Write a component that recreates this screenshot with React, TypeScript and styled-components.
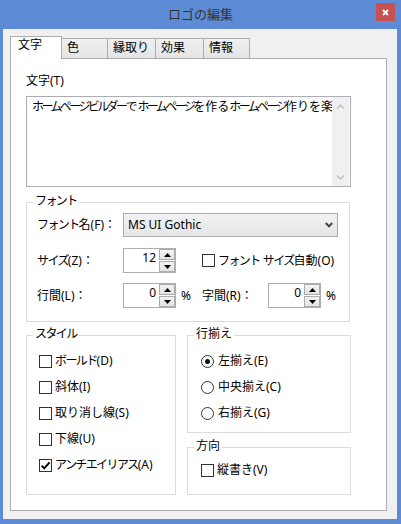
import React from 'react';
import styled, { createGlobalStyle, css } from 'styled-components';

const Global = createGlobalStyle`
  html, body { margin: 0; padding: 0; }
  body {
    font-family: "Noto Sans", "Noto Sans CJK JP", sans-serif;
    font-size: 12px;
    color: #000;
  }
  * { box-sizing: border-box; }
`;

const KanaRun = styled.span<{ $ls: number }>`
  letter-spacing: ${p => p.$ls}px;
`;

const KANA = /([\u30A0-\u30FF]+)/;

const Ja: React.FC<{ text: string; ls?: number }> = ({ text, ls = -1.6 }) => (
  <>
    {text.split(KANA).map((part, i) =>
      i % 2 === 1 ? (
        <KanaRun key={i} $ls={ls}>
          {part}
        </KanaRun>
      ) : (
        <React.Fragment key={i}>{part}</React.Fragment>
      )
    )}
  </>
);

const Window = styled.div`
  width: 401px;
  height: 524px;
  background: #5e8bd6;
  display: flex;
  flex-direction: column;
`;

const TitleBar = styled.div`
  height: 29px;
  flex-shrink: 0;
  display: grid;
  grid-template-columns: 1fr auto 1fr;
  align-items: center;
`;

const Title = styled.div`
  grid-column: 2;
  margin-top: -1px;
  font-family: "Noto Sans CJK JP", sans-serif;
  font-size: 13px;
  line-height: 16px;
  color: #333;
`;

const CloseButton = styled.div`
  grid-column: 3;
  justify-self: end;
  align-self: start;
  margin: 3px 6px 0 0;
  width: 19px;
  height: 18px;
  background: #c75050;
  display: flex;
  align-items: center;
  justify-content: center;
`;

const Body = styled.div`
  flex: 1;
  margin: 0 4px 5px 3px;
  background: #f0f0f0;
  padding: 7px 0 0 7px;
`;

const TabStrip = styled.div`
  display: flex;
  align-items: flex-end;
  height: 22px;
  position: relative;
  z-index: 1;
`;

const Tab = styled.div<{ $active?: boolean; $w: number }>`
  position: relative;
  width: ${p => p.$w}px;
  margin-left: -1px;
  border: 1px solid #acacac;
  border-bottom: none;
  line-height: 16px;
  white-space: nowrap;
  &:first-child { margin-left: 0; }
  ${p =>
    p.$active
      ? css`
          height: 23px;
          margin-bottom: -1px;
          background: #fff;
          padding: 0 0 0 7px;
          z-index: 2;
        `
      : css`
          height: 20px;
          background: linear-gradient(#f0f0f0, #e5e5e5);
          padding: 1px 0 0 5px;
        `}
`;

const Panel = styled.div`
  width: 377px;
  height: 453px;
  background: #fff;
  border: 1px solid #acacac;
  padding: 14px 0 0 15px;
  display: flex;
  flex-direction: column;
`;

const FieldLabel = styled.div`
  line-height: 16px;
`;

const TextBox = styled.div`
  margin-top: 7px;
  width: 325px;
  height: 91px;
  border: 1px solid #abadb3;
  display: flex;
`;

const TextContent = styled.div`
  flex: 1;
  min-width: 0;
  overflow: hidden;
  white-space: nowrap;
  padding: 2px 0 0 5px;
  line-height: 16px;
`;

const ScrollTrack = styled.div`
  width: 17px;
  margin-right: 1px;
  background: #f0f0f0;
  display: flex;
  flex-direction: column;
  justify-content: space-between;
  align-items: center;
  padding: 7px 0 6px;
`;

const Group = styled.div<{ $pl: number; $pb: number; $w?: number; $mt?: number; $grow?: boolean }>`
  border: 1px solid #dcdcdc;
  padding: 0 0 ${p => p.$pb}px ${p => p.$pl}px;
  ${p => (p.$w ? `width: ${p.$w}px;` : '')}
  margin-top: ${p => p.$mt ?? 0}px;
  ${p => (p.$grow ? 'flex: 1;' : '')}
`;

const Legend = styled.div<{ $pl: number }>`
  width: fit-content;
  margin: -9px 0 0 ${p => 6 - p.$pl}px;
  padding: 0 2px;
  background: #fff;
  line-height: 14px;
`;

const Row = styled.div<{ $h: number; $mt: number }>`
  display: flex;
  align-items: center;
  height: ${p => p.$h}px;
  margin-top: ${p => p.$mt}px;
`;

const RowLabel = styled.div<{ $w: number }>`
  width: ${p => p.$w}px;
  line-height: 16px;
  white-space: nowrap;
`;

const Select = styled.div`
  width: 215px;
  height: 24px;
  border: 1px solid #acacac;
  background: linear-gradient(#f2f2f2, #e5e5e5);
  display: flex;
  align-items: center;
  justify-content: space-between;
  padding: 0 4px 0 4px;
  line-height: 16px;
`;

const Spinner = styled.div`
  width: 53px;
  height: 25px;
  border: 1px solid #abadb3;
  background: #fff;
  display: flex;
`;

const SpinValue = styled.div`
  flex: 1;
  text-align: right;
  padding: 1px 3px 0 0;
  line-height: 16px;
`;

const SpinButtons = styled.div`
  width: 16px;
  display: flex;
  flex-direction: column;
  gap: 1px;
`;

const SpinButton = styled.div`
  flex: 1;
  border: 1px solid #acacac;
  background: linear-gradient(#f2f2f2, #e3e3e3);
  display: flex;
  align-items: center;
  justify-content: center;
`;

const Percent = styled.div<{ $w: number }>`
  width: ${p => p.$w}px;
  padding-left: 5px;
  line-height: 16px;
`;

const Bottom = styled.div`
  margin-top: 13px;
  display: grid;
  grid-template-columns: 150px 164px;
  column-gap: 11px;
`;

const RightCol = styled.div`
  display: flex;
  flex-direction: column;
`;

const ChoiceList = styled.div<{ $mt: number }>`
  margin-top: ${p => p.$mt}px;
  display: flex;
  flex-direction: column;
`;

const Choice = styled.div<{ $gap: number; $ml?: number }>`
  display: flex;
  align-items: center;
  height: 26px;
  gap: ${p => p.$gap}px;
  margin-left: ${p => p.$ml ?? 0}px;
  line-height: 16px;
  white-space: nowrap;
`;

const CheckBox = styled.div`
  width: 13px;
  height: 13px;
  flex-shrink: 0;
  border: 1px solid #333;
  background: #fff;
  display: flex;
  align-items: center;
  justify-content: center;
`;

const RadioCircle = styled.div`
  width: 13px;
  height: 13px;
  flex-shrink: 0;
  border: 1px solid #333;
  border-radius: 50%;
  background: #fff;
  display: flex;
  align-items: center;
  justify-content: center;
`;

const RadioDot = styled.div`
  width: 5px;
  height: 5px;
  border-radius: 50%;
  background: #111;
`;

const Check: React.FC<{ checked?: boolean; label: string; gap?: number; ml?: number }> = ({ checked, label, gap = 3, ml }) => (
  <Choice $gap={gap} $ml={ml}>
    <CheckBox>
      {checked && (
        <svg width="11" height="11" viewBox="0 0 11 11">
          <path d="M1.6 5.6 L4.2 8.4 L9.6 2.4" fill="none" stroke="#000" strokeWidth="1.9" />
        </svg>
      )}
    </CheckBox>
    <span>
      <Ja text={label} />
    </span>
  </Choice>
);

const Radio: React.FC<{ selected?: boolean; label: string }> = ({ selected, label }) => (
  <Choice $gap={4}>
    <RadioCircle>{selected && <RadioDot />}</RadioCircle>
    <span>
      <Ja text={label} />
    </span>
  </Choice>
);

const Spin: React.FC<{ value: string }> = ({ value }) => (
  <Spinner>
    <SpinValue>{value}</SpinValue>
    <SpinButtons>
      <SpinButton>
        <svg width="7" height="4" viewBox="0 0 7 4">
          <path d="M0 4 L3.5 0 L7 4 Z" fill="#000" />
        </svg>
      </SpinButton>
      <SpinButton>
        <svg width="7" height="4" viewBox="0 0 7 4">
          <path d="M0 0 L3.5 4 L7 0 Z" fill="#000" />
        </svg>
      </SpinButton>
    </SpinButtons>
  </Spinner>
);

export default function App() {
  return (
    <>
      <Global />
      <Window>
        <TitleBar>
          <Title>ロゴの編集</Title>
          <CloseButton>
            <svg width="7" height="7" viewBox="0 0 7 7">
              <path d="M1 1 L6 6 M6 1 L1 6" stroke="#fff" strokeWidth="1.8" />
            </svg>
          </CloseButton>
        </TitleBar>
        <Body>
          <TabStrip>
            <Tab $active $w={52}>文字</Tab>
            <Tab $w={47}>色</Tab>
            <Tab $w={49}>縁取り</Tab>
            <Tab $w={49}>効果</Tab>
            <Tab $w={47}>情報</Tab>
          </TabStrip>
          <Panel>
            <FieldLabel>文字(T)</FieldLabel>
            <TextBox>
              <TextContent>
                <Ja text="ホームページビルダーでホームページを作るホームページ作りを楽しく" ls={-2.6} />
              </TextContent>
              <ScrollTrack>
                <svg width="9" height="5" viewBox="0 0 9 5">
                  <path d="M1 4.5 L4.5 1 L8 4.5" fill="none" stroke="#c2c2c2" strokeWidth="1.6" />
                </svg>
                <svg width="9" height="5" viewBox="0 0 9 5">
                  <path d="M1 0.5 L4.5 4 L8 0.5" fill="none" stroke="#c2c2c2" strokeWidth="1.6" />
                </svg>
              </ScrollTrack>
            </TextBox>

            <Group $pl={10} $pb={13} $w={324} $mt={15}>
              <Legend $pl={10}>
                <Ja text="フォント" />
              </Legend>
              <Row $h={24} $mt={5}>
                <RowLabel $w={86}>
                  <Ja text="フォント名(F)：" />
                </RowLabel>
                <Select>
                  <span>MS UI Gothic</span>
                  <svg width="8" height="6" viewBox="0 0 8 6">
                    <path d="M0.8 1 L4 4.4 L7.2 1" fill="none" stroke="#444" strokeWidth="2" />
                  </svg>
                </Select>
              </Row>
              <Row $h={25} $mt={11}>
                <RowLabel $w={86}>
                  <Ja text="サイズ(Z)：" />
                </RowLabel>
                <Spin value="12" />
                <Check label="フォント サイズ自動(O)" gap={3} ml={26} />
              </Row>
              <Row $h={25} $mt={10}>
                <RowLabel $w={86}>行間(L)：</RowLabel>
                <Spin value="0" />
                <Percent $w={26}>%</Percent>
                <RowLabel $w={66}>字間(R)：</RowLabel>
                <Spin value="0" />
                <Percent $w={20}>%</Percent>
              </Row>
            </Group>

            <Bottom>
              <Group $pl={12} $pb={16}>
                <Legend $pl={12}>
                  <Ja text="スタイル" />
                </Legend>
                <ChoiceList $mt={7}>
                  <Check label="ボールド(D)" />
                  <Check label="斜体(I)" />
                  <Check label="取り消し線(S)" />
                  <Check label="下線(U)" />
                  <Check checked label="アンチエイリアス(A)" />
                </ChoiceList>
              </Group>
              <RightCol>
                <Group $pl={13} $pb={6}>
                  <Legend $pl={13}>行揃え</Legend>
                  <ChoiceList $mt={7}>
                    <Radio selected label="左揃え(E)" />
                    <Radio label="中央揃え(C)" />
                    <Radio label="右揃え(G)" />
                  </ChoiceList>
                </Group>
                <Group $pl={13} $pb={11} $mt={14} $grow>
                  <Legend $pl={13}>方向</Legend>
                  <ChoiceList $mt={4}>
                    <Check label="縦書き(V)" />
                  </ChoiceList>
                </Group>
              </RightCol>
            </Bottom>
          </Panel>
        </Body>
      </Window>
    </>
  );
}
